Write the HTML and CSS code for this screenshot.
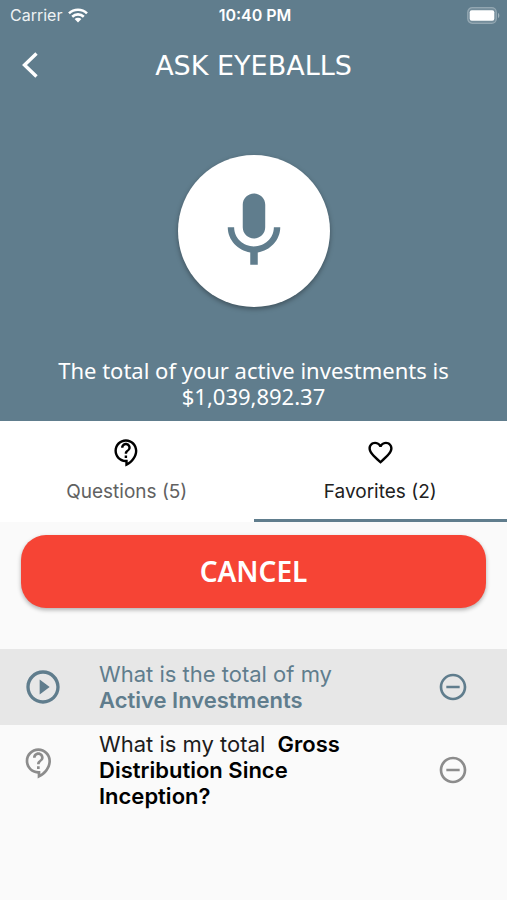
FILE: index.html
```html
<!DOCTYPE html>
<html lang="en">
<head>
  <meta charset="UTF-8" />
  <meta name="viewport" content="width=device-width, initial-scale=1" />
  <title>Ask Eyeballs</title>
  <link rel="stylesheet" href="styles.css">
</head>
<body>
  <header class="header">
    <div class="status-bar">
      <div class="carrier">
        <span>Carrier</span>
        <svg class="wifi" viewBox="0 0 20 15" aria-hidden="true">
          <path d="M1 5.4a13 13 0 0 1 18 0M4.2 8.7a8.4 8.4 0 0 1 11.6 0" fill="none" stroke="currentColor" stroke-width="2.6"/>
          <path d="M10 14.6l-3.4-3.5a4.9 4.9 0 0 1 6.8 0z" fill="currentColor"/>
        </svg>
      </div>
      <div class="clock">10:40 PM</div>
      <svg class="battery" viewBox="0 0 33 17" aria-hidden="true">
        <rect x="0.7" y="0.7" width="28.6" height="15.6" rx="4.5" fill="#fff" fill-opacity="0.12" stroke="#fff" stroke-opacity="0.3" stroke-width="1.2"/>
        <rect x="2.7" y="3.2" width="24.6" height="10.6" rx="2" fill="#fff"/>
        <path d="M31 6v5c1.8-.6 1.8-4.4 0-5z" fill="#fff" fill-opacity="0.4"/>
      </svg>
    </div>

    <div class="nav">
      <button class="icon-btn" aria-label="Back">
        <svg class="back-icon" viewBox="0 0 18 28" aria-hidden="true">
          <path d="M15.5 2.5L3.5 14l12 11.5" fill="none" stroke="currentColor" stroke-width="3.4"/>
        </svg>
      </button>
      <h1 class="title">ASK EYEBALLS</h1>
    </div>

    <button class="mic-btn" aria-label="Ask a question">
      <svg class="mic-icon" viewBox="0 0 24 24" aria-hidden="true">
        <path fill="currentColor" d="M12 14c1.66 0 2.99-1.34 2.99-3L15 5c0-1.66-1.34-3-3-3S9 3.34 9 5v6c0 1.66 1.34 3 3 3zm5.3-3c0 3-2.54 5.1-5.3 5.1S6.7 14 6.7 11H5c0 3.41 2.72 6.23 6 6.72V21h2v-3.28c3.28-.48 6-3.3 6-6.72h-1.7z"/>
      </svg>
    </button>

    <p class="answer">The total of your active investments is $1,039,892.37</p>
  </header>

  <!-- Tabs -->
  <div class="tabs" role="tablist">
    <button class="tab" role="tab" aria-selected="false">
      <svg class="tab-icon" viewBox="0 0 24 24" aria-hidden="true">
        <path fill="currentColor" d="M11 23.59v-3.6c-5.01-.26-9-4.42-9-9.49C2 5.26 6.26 1 11.5 1S21 5.26 21 10.5c0 4.95-3.44 9.93-8.57 12.4l-1.43.69zM11.5 3C7.36 3 4 6.36 4 10.5S7.36 18 11.5 18H13v2.3c3.64-2.3 6-6.08 6-9.8C19 6.36 15.64 3 11.5 3zm-1 11.5h2v2h-2zm2-1.5h-2c0-3.25 3-3 3-5 0-1.1-.9-2-2-2s-2 .9-2 2h-2c0-2.21 1.79-4 4-4s4 1.79 4 4c0 2.5-3 2.75-3 5z"/>
      </svg>
      <span class="tab-label">Questions (5)</span>
    </button>
    <button class="tab active" role="tab" aria-selected="true">
      <svg class="tab-icon" viewBox="0 0 24 24" aria-hidden="true">
        <path fill="currentColor" d="M16.5 3c-1.74 0-3.41.81-4.5 2.09C10.91 3.81 9.24 3 7.5 3 4.42 3 2 5.42 2 8.5c0 3.78 3.4 6.86 8.55 11.54L12 21.35l1.45-1.32C18.6 15.36 22 12.28 22 8.5 22 5.42 19.58 3 16.5 3zm-4.4 15.55l-.1.1-.1-.1C7.14 14.24 4 11.39 4 8.5 4 6.5 5.5 5 7.5 5c1.54 0 3.04.99 3.57 2.36h1.87C13.46 5.99 14.96 5 16.5 5c2 0 3.5 1.5 3.5 3.5 0 2.89-3.14 5.74-7.9 10.05z"/>
      </svg>
      <span class="tab-label">Favorites (2)</span>
    </button>
  </div>

  <main>
    <button class="cancel-btn">CANCEL</button>

    <ul class="questions">
      <li class="question selected">
        <button class="icon-btn leading" aria-label="Play">
          <svg class="play-icon" viewBox="0 0 24 24" aria-hidden="true">
            <path fill="currentColor" d="M10 16.5l6-4.5-6-4.5v9zM12 2C6.48 2 2 6.48 2 12s4.48 10 10 10 10-4.48 10-10S17.52 2 12 2zm0 18c-4.41 0-8-3.59-8-8s3.59-8 8-8 8 3.59 8 8-3.59 8-8 8z"/>
          </svg>
        </button>
        <p class="question-text">What is the total of my <b>Active Investments</b></p>
        <button class="icon-btn" aria-label="Remove from favorites">
          <svg class="row-icon" viewBox="0 0 24 24" aria-hidden="true">
            <path fill="currentColor" d="M7 11v2h10v-2H7zm5-9C6.48 2 2 6.48 2 12s4.48 10 10 10 10-4.48 10-10S17.52 2 12 2zm0 18c-4.41 0-8-3.59-8-8s3.59-8 8-8 8 3.59 8 8-3.59 8-8 8z"/>
          </svg>
        </button>
      </li>
      <li class="question">
        <div class="leading">
          <svg class="row-icon" viewBox="0 0 24 24" aria-hidden="true">
            <path fill="currentColor" d="M11 23.59v-3.6c-5.01-.26-9-4.42-9-9.49C2 5.26 6.26 1 11.5 1S21 5.26 21 10.5c0 4.95-3.44 9.93-8.57 12.4l-1.43.69zM11.5 3C7.36 3 4 6.36 4 10.5S7.36 18 11.5 18H13v2.3c3.64-2.3 6-6.08 6-9.8C19 6.36 15.64 3 11.5 3zm-1 11.5h2v2h-2zm2-1.5h-2c0-3.25 3-3 3-5 0-1.1-.9-2-2-2s-2 .9-2 2h-2c0-2.21 1.79-4 4-4s4 1.79 4 4c0 2.5-3 2.75-3 5z"/>
          </svg>
        </div>
        <p class="question-text">What is my total &nbsp;<b>Gross Distribution Since Inception?</b></p>
        <button class="icon-btn" aria-label="Remove from favorites">
          <svg class="row-icon" viewBox="0 0 24 24" aria-hidden="true">
            <path fill="currentColor" d="M7 11v2h10v-2H7zm5-9C6.48 2 2 6.48 2 12s4.48 10 10 10 10-4.48 10-10S17.52 2 12 2zm0 18c-4.41 0-8-3.59-8-8s3.59-8 8-8 8 3.59 8 8-3.59 8-8 8z"/>
          </svg>
        </button>
      </li>
    </ul>
  </main>
</body>
</html>
```
FILE: styles.css
```css
* {
  box-sizing: border-box;
}
body {
  margin: 0;
  min-height: 100vh;
  font-family: Inter, "Liberation Sans", sans-serif;
  background-color: #fafafa;
  color: #1c1c1c;
}
button {
  border: none;
  padding: 0;
  background: none;
  color: inherit;
  font-family: inherit;
  cursor: pointer;
}
svg {
  display: block;
}

/* Header */
.header {
  display: flex;
  flex-direction: column;
  background-color: #607d8d;
  color: #fff;
  padding-bottom: 12px;
}
.status-bar {
  display: grid;
  grid-template-columns: 1fr auto 1fr;
  align-items: center;
  height: 30px;
  padding: 0 7px 0 10px;
  font-size: 16px;
}
.carrier {
  display: flex;
  align-items: center;
  gap: 6px;
  color: #eef2f4;
}
.wifi {
  width: 20px;
  height: 15px;
  color: #fff;
}
.clock {
  font-weight: 600;
}
.battery {
  width: 33px;
  height: 17px;
  justify-self: end;
}
.nav {
  display: grid;
  grid-template-columns: 36px 1fr 36px;
  align-items: center;
  height: 70px;
  padding: 0 21px;
}
.back-icon {
  width: 18px;
  height: 28px;
}
.title {
  margin: 0;
  font-family: "DejaVu Sans", sans-serif;
  font-size: 27px;
  font-weight: 400;
  text-align: center;
}
.mic-btn {
  display: flex;
  align-items: center;
  justify-content: center;
  align-self: center;
  width: 152px;
  height: 152px;
  margin: 55px 0 50px;
  border-radius: 50%;
  background-color: #fff;
  color: #607d8d;
  box-shadow: 0 2px 5px rgba(0, 0, 0, 0.35);
}
.mic-icon {
  width: 90px;
  height: 90px;
}
.answer {
  margin: 0;
  padding: 0 40px;
  font-family: "Noto Sans", sans-serif;
  font-size: 22px;
  line-height: 26px;
  text-align: center;
}

/* Tabs */
.tabs {
  display: grid;
  grid-template-columns: 1fr 1fr;
  background-color: #fff;
}
.tab {
  display: flex;
  flex-direction: column;
  align-items: center;
  gap: 13px;
  padding: 17px 0 15px;
  border-bottom: 3px solid transparent;
}
.tab.active {
  border-bottom-color: #607d8d;
}
.tab-icon {
  width: 29px;
  height: 29px;
  color: #000;
}
.tab-label {
  font-size: 19px;
  line-height: 24px;
  color: #616161;
}
.tab.active .tab-label {
  color: #212121;
}

/* Content */
.cancel-btn {
  display: block;
  width: calc(100% - 42px);
  height: 73px;
  margin: 13px auto 41px;
  padding-bottom: 2px;
  border-radius: 25px;
  background-color: #f64435;
  color: #fff;
  font-family: "Noto Sans", sans-serif;
  font-size: 28px;
  font-weight: 600;
  box-shadow: 0 2px 4px rgba(0, 0, 0, 0.3);
}
.questions {
  list-style: none;
  margin: 0;
  padding: 0;
}
.question {
  display: grid;
  grid-template-columns: 76px 1fr 32px;
  align-items: center;
  padding: 6px 38px 6px 23px;
  color: #8c8c8c;
}
.question.selected {
  padding-top: 12px;
  padding-bottom: 12px;
  background-color: #e7e7e7;
  color: #607d8d;
}
.leading {
  align-self: start;
  padding-top: 16px;
}
.selected .leading {
  align-self: center;
  justify-self: start;
  padding-top: 0;
}
.play-icon {
  width: 40px;
  height: 40px;
}
.row-icon {
  width: 32px;
  height: 32px;
}
.question-text {
  max-width: 260px;
  margin: 0;
  font-size: 22px;
  line-height: 26px;
  color: #1c1c1c;
}
.question-text b {
  font-weight: 600;
  color: #000;
}
.selected .question-text,
.selected .question-text b {
  color: #607d8d;
}
```
